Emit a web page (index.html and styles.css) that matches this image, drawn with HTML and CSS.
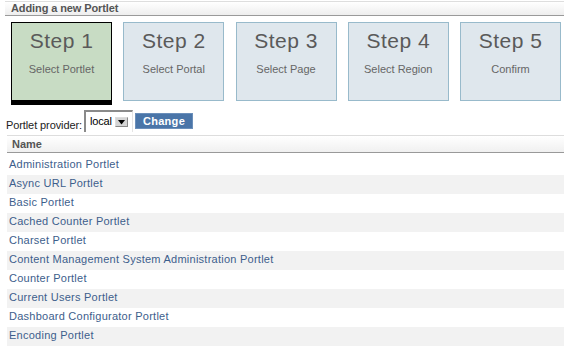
FILE: index.html
```html
<!DOCTYPE html>
<html>
<head>
<meta charset="utf-8">
<link rel="stylesheet" href="styles.css">
</head>
<body>
<div class="title">Adding a new Portlet</div>
<div class="steps">
  <div class="step active"><div class="step-num">Step 1</div><div class="step-label">Select Portlet</div></div>
  <div class="step"><div class="step-num">Step 2</div><div class="step-label">Select Portal</div></div>
  <div class="step"><div class="step-num">Step 3</div><div class="step-label">Select Page</div></div>
  <div class="step"><div class="step-num">Step 4</div><div class="step-label">Select Region</div></div>
  <div class="step"><div class="step-num">Step 5</div><div class="step-label">Confirm</div></div>
</div>
<div class="provider">
  <span class="provider-label">Portlet provider:</span>
  <span class="select"><span class="select-value">local</span><span class="select-arrow"><svg width="9" height="5" viewBox="0 0 9 5"><polygon points="1,0 8,0 4.5,4.5" fill="#000"/></svg></span></span>
  <button class="change">Change</button>
</div>
<div class="table">
  <div class="thead">Name</div>
  <div class="rows">
    <div class="row"><a href="#">Administration Portlet</a></div>
    <div class="row alt"><a href="#">Async URL Portlet</a></div>
    <div class="row"><a href="#">Basic Portlet</a></div>
    <div class="row alt"><a href="#">Cached Counter Portlet</a></div>
    <div class="row"><a href="#">Charset Portlet</a></div>
    <div class="row alt"><a href="#">Content Management System Administration Portlet</a></div>
    <div class="row"><a href="#">Counter Portlet</a></div>
    <div class="row alt"><a href="#">Current Users Portlet</a></div>
    <div class="row"><a href="#">Dashboard Configurator Portlet</a></div>
    <div class="row alt"><a href="#">Encoding Portlet</a></div>
  </div>
</div>
</body>
</html>
```

FILE: styles.css
```css
html, body { margin: 0; padding: 0; background: #fff; }
body {
  font-family: "Liberation Sans", Arial, sans-serif;
  font-size: 11px;
  color: #333;
  padding-top: 1px;
  overflow: hidden;
  width: 564px;
  height: 347px;
}
.title {
  margin-left: 5px;
  height: 13px;
  line-height: 13px;
  border-top: 1px solid #dedede;
  border-bottom: 1px solid #9a9a9a;
  background: linear-gradient(#ffffff, #eeeeee);
  padding-left: 6px;
  font-weight: bold;
  color: #555;
  letter-spacing: -0.1px;
}
.steps {
  display: flex;
  align-items: flex-start;
  gap: 11.25px;
  margin: 6px 0 0 11px;
}
.step {
  width: 99px;
  height: 77px;
  border: 1px solid #98bacb;
  background: #dfe7ed;
  text-align: center;
}
.step.active {
  background: #c8dcc4;
  border-color: #000;
  border-bottom-width: 5px;
}
.step-num {
  font-size: 21px;
  letter-spacing: 0.5px;
  line-height: 24px;
  color: #5a5a5a;
  margin-top: 6px;
}
.step-label {
  font-size: 11px;
  line-height: 13px;
  color: #666;
  margin-top: 10px;
}
.provider {
  display: flex;
  align-items: flex-start;
  margin: 5px 0 0 6px;
  height: 22px;
}
.provider-label {
  line-height: 13px;
  margin-top: 9px;
  color: #222;
  width: 78px;
  white-space: nowrap;
  letter-spacing: -0.1px;
}
.select {
  position: relative;
  display: block;
  width: 46px;
  height: 20px;
  border-top: 2px solid #8a8a8a;
  border-left: 2px solid #8a8a8a;
  border-right: 1px solid #e4e4e4;
  border-bottom: 0;
  background: #fff;
}
.select-value {
  position: absolute;
  left: 4px;
  top: 3px;
  line-height: 13px;
  color: #000;
  letter-spacing: -0.2px;
}
.select-arrow {
  position: absolute;
  left: 29px;
  top: 5px;
  width: 13px;
  height: 10px;
  box-sizing: border-box;
  border: 1px solid #888;
  border-top-color: #ddd;
  border-left-color: #ddd;
  background: #d4d4d4;
  display: flex;
  align-items: center;
  justify-content: center;
}
.change {
  margin: 3px 0 0 2px;
  width: 58px;
  height: 16px;
  padding: 0;
  border: 1px solid #6b8fba;
  background: #4a75a8;
  color: #fff;
  font-family: "Liberation Sans", Arial, sans-serif;
  font-weight: bold;
  font-size: 11px;
  letter-spacing: 0.3px;
  line-height: 14px;
}
.table {
  margin: 3px 0 0 7px;
}
.thead {
  height: 16px;
  line-height: 16px;
  border-top: 1px solid #dddddd;
  border-bottom: 1px solid #999999;
  background: linear-gradient(#ffffff, #f0f0f0);
  padding-left: 5px;
  font-weight: bold;
  color: #555;
}
.rows {
  margin-top: 3px;
}
.row {
  height: 16px;
  line-height: 16px;
  padding: 0 0 3px 2px;
}
.row.alt { background: #f2f2f2; }
.row a {
  color: #3d5e8c;
  text-decoration: none;
  letter-spacing: 0.25px;
}
```
